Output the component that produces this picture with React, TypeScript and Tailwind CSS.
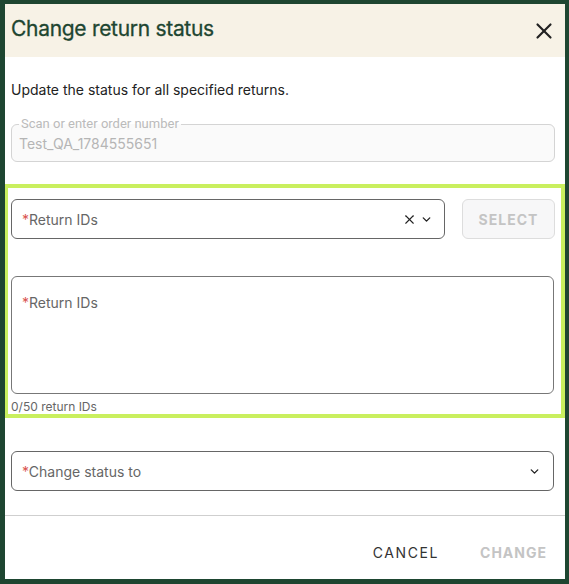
import { X, ChevronDown } from 'lucide-react';

const inter = { fontFamily: 'Inter, "Noto Sans", sans-serif' };

function Req({ label }: { label: string }) {
  return (
    <span className="text-[14px] text-[#666]">
      <span className="text-[#d9534f]">*</span>
      {label}
    </span>
  );
}

export default function App() {
  return (
    <div className="w-[569px] h-[584px] bg-[#1e4631] pt-[4px] pr-[4px] pb-[5px] pl-[5px]" style={inter}>
      <div className="w-full h-full bg-white flex flex-col">
        {/* header */}
        <div className="h-[53px] shrink-0 bg-[#f7f2e6] flex items-center justify-between pl-[6px] pr-[8px]">
          <h1 className="text-[21px] font-normal text-[#1e4631] tracking-[-0.3px] mt-[-3px]" style={{ WebkitTextStroke: '0.3px #1e4631' }}>
            Change return status
          </h1>
          <X className="w-[26px] h-[26px] text-[#222]" strokeWidth={2} />
        </div>

        <div className="px-[6px]">
          <p className="mt-[23px] text-[14px] leading-[20px] text-[#222]">Update the status for all specified returns.</p>

          <fieldset className="mt-[18px] h-[44px] border border-[#d4d4d4] rounded-[6px] bg-[#fafafa] px-[7px] pb-[4px] mr-[4px]">
            <legend className="px-[2px] text-[13px] leading-[12px] text-[#bbb]" style={{ fontFamily: 'Roboto, sans-serif' }}>
              Scan or enter order number
            </legend>
            <div className="text-[14px] text-[#b5b5b5] leading-[20px] mt-[4px]">Test_QA_1784555651</div>
          </fieldset>
        </div>

        {/* highlighted block */}
        <div className="mt-[22px] border-[4px] border-l-[3px] border-[#c9ef5e] pl-[3px] pr-[6px] pt-[11px]">
          <div className="flex items-center gap-[17px]">
            <div className="flex-1 h-[40px] border border-[#666] rounded-[6px] flex items-center justify-between pl-[10px] pr-[11px]">
              <Req label="Return IDs" />
              <div className="flex items-center gap-[3px] text-[#222]">
                <X className="w-[15px] h-[15px]" strokeWidth={1.8} />
                <ChevronDown className="w-[13px] h-[13px]" strokeWidth={2.5} />
              </div>
            </div>
            <button className="w-[93px] h-[40px] border border-[#ddd] rounded-[6px] bg-[#f7f7f8] text-[14px] font-bold tracking-[1px] text-[#c4c4c4]">
              SELECT
            </button>
          </div>

          <div className="mt-[37px] mr-[1px] h-[118px] border border-[#777] rounded-[6px] px-[10px] pt-[13px]">
            <Req label="Return IDs" />
          </div>
          <div className="mt-[6px] text-[12px] leading-[14px] text-[#666]">0/50 return IDs</div>
        </div>

        <div className="px-[6px]">
          <div className="mt-[33px] mr-[5px] h-[40px] border border-[#666] rounded-[6px] flex items-center justify-between pl-[10px] pr-[12px]">
            <Req label="Change status to" />
            <ChevronDown className="w-[13px] h-[13px] text-[#222]" strokeWidth={2.5} />
          </div>
        </div>

        <div className="mt-[24px] h-px bg-[#cfcfcf]" />

        <div className="flex-1 flex items-center justify-end gap-[41px] pr-[18px] pt-[10px]">
          <button className="text-[14px] tracking-[1.6px] text-[#333]">CANCEL</button>
          <button className="text-[14px] font-bold tracking-[1px] text-[#c4c4c4]">CHANGE</button>
        </div>
      </div>
    </div>
  );
}
